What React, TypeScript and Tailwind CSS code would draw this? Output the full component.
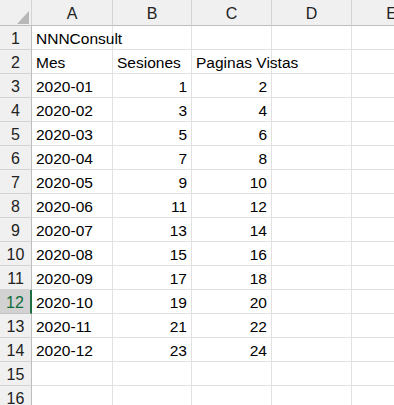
const columns = ["A", "B", "C", "D", "E"];

type Cell = { v: string; num?: boolean };

const data: Cell[][] = [
  [{ v: "NNNConsult" }],
  [{ v: "Mes" }, { v: "Sesiones" }, { v: "Paginas Vistas" }],
  ...Array.from({ length: 12 }, (_, i) => [
    { v: `2020-${String(i + 1).padStart(2, "0")}` },
    { v: String(i * 2 + 1), num: true },
    { v: String(i * 2 + 2), num: true },
  ]),
];

const selectedRow = 12;

export default function App() {
  return (
    <div
      className="w-[394px] h-[405px] overflow-hidden bg-white text-[15.5px] text-black"
      style={{ fontFamily: '"Liberation Sans", Arial, sans-serif' }}
    >
      <div className="grid w-[432px] grid-cols-[32px_81px_79px_80px_80px_80px] grid-rows-[26px] auto-rows-[24px]">
        {/* corner */}
        <div className="relative bg-[#f0f0f0] border-r border-[#d4d4d4] border-b border-b-[#bdbdbd]">
          <svg className="absolute left-[17px] top-[11px]" width="12" height="13" viewBox="0 0 12 13">
            <polygon points="12,0 12,13 0,13" fill="#b8b8b8" />
          </svg>
        </div>
        {columns.map((c) => (
          <div
            key={c}
            className="flex items-center justify-center pt-[2px] bg-[#f0f0f0] border-r border-[#d4d4d4] border-b border-b-[#bdbdbd] text-[16px] text-[#222]"
          >
            {c}
          </div>
        ))}

        {Array.from({ length: 16 }, (_, r) => {
          const row = data[r] ?? [];
          const sel = r + 1 === selectedRow;
          return [
            <div
              key={`h${r}`}
              className={
                sel
                  ? "flex items-center justify-center pt-[2px] bg-[#d2d2d2] text-[#0e6b3a] border-b border-[#c4c4c4] border-r-2 border-r-[#1e6e42] text-[16px]"
                  : "flex items-center justify-center pt-[2px] bg-[#f0f0f0] text-[#222] border-b border-[#d4d4d4] border-r border-r-[#bdbdbd] text-[16px]"
              }
            >
              {r + 1}
            </div>,
            ...columns.map((c, ci) => {
              const cell = row[ci];
              return (
                <div
                  key={`${r}${c}`}
                  className={
                    "flex items-center pt-[2px] border-r border-b border-[#e1e1e1] px-1 whitespace-nowrap overflow-visible " +
                    (cell?.num ? "justify-end" : "justify-start")
                  }
                >
                  {cell?.v}
                </div>
              );
            }),
          ];
        })}
      </div>
    </div>
  );
}
